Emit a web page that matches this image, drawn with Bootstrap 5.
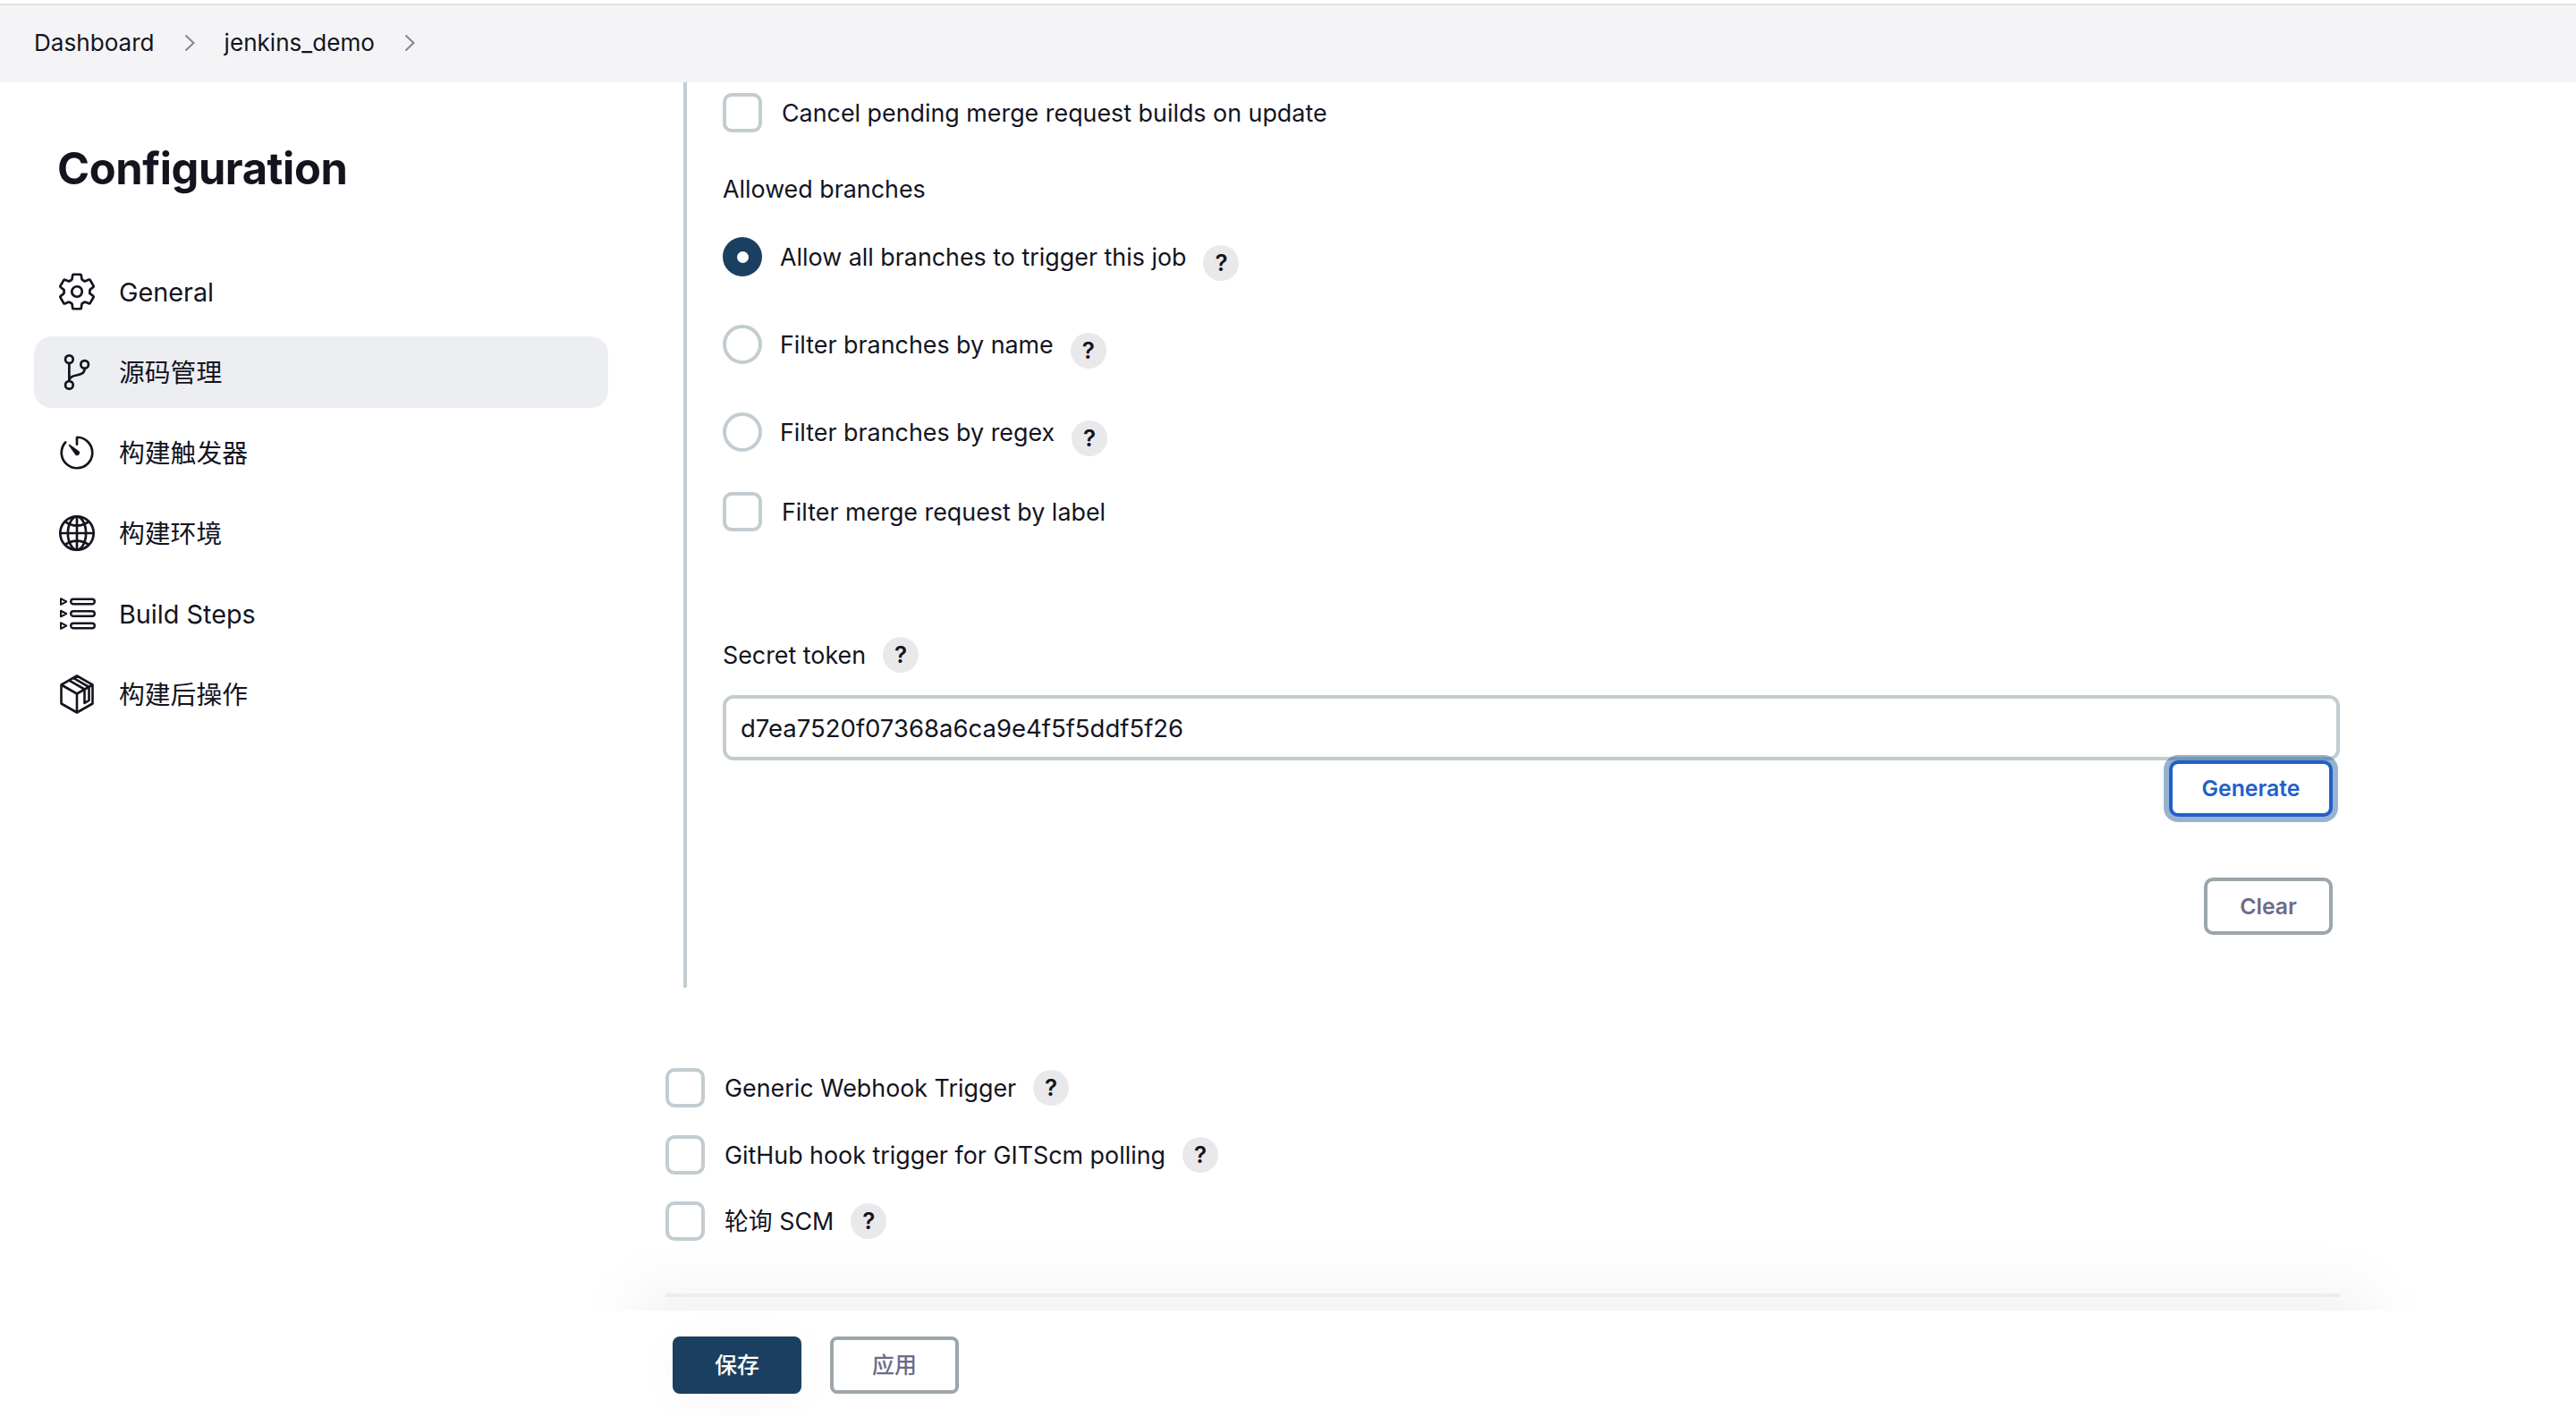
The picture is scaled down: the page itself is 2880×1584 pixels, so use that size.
<!doctype html>
<html lang="zh"><head><meta charset="utf-8">
<link href="https://cdn.jsdelivr.net/npm/bootstrap@5.3.0/dist/css/bootstrap.min.css" rel="stylesheet">
<style>
html,body{height:1584px;overflow:hidden}
body{background:#fff;color:#14141f;font-family:Inter,"Noto Sans CJK SC",sans-serif;font-size:26.85px;line-height:44px}
.topstrip{margin-top:4px;height:88px;background:#f4f4f6;border-top:2px solid #dfe0e3;padding:0 0 2px 38px;font-size:26.1px}
.crumbgap{width:78px;justify-content:center;color:#85858e}
.sidepane{width:744px;flex:none;padding:0 64px 0 38px}
.pagetitle{font-size:48.8px;font-weight:700;line-height:60px;margin:67px 0 0 26px;letter-spacing:-.4px}
.sidemenu{margin-top:67px;gap:10px}
.sideitem{height:80px;padding-left:25px;gap:24px;border-radius:20px;font-size:28.8px;color:#14141f}
.sideitem span{padding-top:2px}
.sideitem.current{background:#edeef2}
.sideitem svg{width:46px;height:46px;flex:none}
.mainpane{width:1872px;flex:none}
.nestbox{margin-left:20px;height:1012px;border-left:4px solid #c3ccd1;padding:12px 0 0 40px}
.fakecheck{width:44px;height:44px;border:4px solid #c3ccd1;border-radius:10px;flex:none;background:#fff;margin-right:22px}
.fakeradio{width:44px;height:44px;border:4px solid #c3ccd1;border-radius:50%;flex:none;background:#fff;margin-right:20px}
.fakeradio.on{border:none;background:#1a3f60;display:flex;align-items:center;justify-content:center}
.fakeradio.on::after{content:"";width:13px;height:13px;background:#fff;border-radius:50%}
.optrow,.radrow{height:44px}
.helpdot{width:40px;height:40px;border-radius:50%;background:#e9e9eb;font-size:26px;font-weight:600;line-height:40px;text-align:center;flex:none;margin-left:19px}
.helpdot.low{transform:translateY(7px)}
.gap32{margin-top:32px}.gap41{margin-top:41px}.gap54{margin-top:54px}.gap45{margin-top:45px}.gap116{margin-top:116px}
.tokeninput{height:73px;margin-top:23px;border:4px solid #c3ccd1;border-radius:12px;padding:0 16px;font-size:27.5px;color:#14141f;box-shadow:none;width:1808px;line-height:1}
.tokenactions{width:1808px}
.actbtn{font-size:24.8px;font-weight:600;line-height:1;border-width:4px;border-style:solid;border-radius:10px;background:#fff;padding:0}
.genbtn{width:183px;height:63px;margin-right:8px;border-color:#2160c8;color:#2160c8;box-shadow:0 0 0 6px rgba(26,86,150,.45);position:relative}
.clearbtn{width:144px;height:64px;margin:68px 8px 0 0;border-color:#9ba6ac;color:#6c6c87}
.lowerlist{margin-top:90px}
.lowerrow{height:44px;margin-bottom:30.5px}
.lowerrow:last-child{margin-bottom:0}
.lowerrow .fakecheck{margin-right:22px}
.shadeband{position:relative;height:78px;padding-top:59px;margin-left:-744px;width:2880px;overflow:hidden}
.shadeglow{position:absolute;left:712px;width:1938px;top:56px;height:120px;background:rgba(0,0,0,.055);filter:blur(30px)}
.rulebar{position:relative;height:4px;background:#ebebf0;margin-left:744px;width:1872px}
.savebar{position:relative;height:119px;background:#fff;margin-left:-744px;width:2880px;padding:29px 0 0 752px;gap:32px;align-items:flex-start}
.footbtn{width:144px;height:64px;font-size:25px;font-weight:500;border-radius:8px;padding:0;line-height:1;border:4px solid #1a3f60}
.footsave{background:#1a3f60;color:#fff;box-shadow:0 6px 50px rgba(0,0,0,.035)}
.footapply{background:#fff;color:#6c6c87;border-color:#9ba6ac}
</style></head><body>
<div class="topstrip d-flex align-items-center">
 <span>Dashboard</span>
 <span class="crumbgap d-flex"><svg width="12" height="20" viewBox="0 0 12 20" fill="none" stroke="currentColor" stroke-width="2"><path d="M1.5 1.5l9 8.5-9 8.5"/></svg></span>
 <span>jenkins_demo</span>
 <span class="crumbgap d-flex"><svg width="12" height="20" viewBox="0 0 12 20" fill="none" stroke="currentColor" stroke-width="2"><path d="M1.5 1.5l9 8.5-9 8.5"/></svg></span>
</div>
<div class="d-flex">
 <aside class="sidepane">
  <h1 class="pagetitle">Configuration</h1>
  <div class="sidemenu d-flex flex-column">
   <div class="sideitem d-flex align-items-center"><svg viewBox="0 0 512 512" fill="none" stroke="#14141f" stroke-width="30" stroke-linejoin="round"><path d="M262.29 192.31a64 64 0 1057.4 57.4 64.13 64.13 0 00-57.4-57.4zM416.39 256a154.34 154.34 0 01-1.53 20.79l45.21 35.46a10.81 10.81 0 012.45 13.75l-42.77 74a10.81 10.81 0 01-13.14 4.59l-44.9-18.08a16.11 16.11 0 00-15.17 1.75A164.48 164.48 0 01325 400.8a15.94 15.94 0 00-8.82 12.14l-6.73 47.89a11.08 11.08 0 01-10.68 9.17h-85.54a11.11 11.11 0 01-10.69-8.87l-6.72-47.82a16.07 16.07 0 00-9-12.22 155.3 155.3 0 01-21.46-12.57 16 16 0 00-15.11-1.71l-44.89 18.07a10.81 10.81 0 01-13.14-4.58l-42.77-74a10.8 10.8 0 012.45-13.75l38.21-30a16.05 16.05 0 006-14.08c-.36-4.17-.58-8.33-.58-12.5s.21-8.27.58-12.35a16 16 0 00-6.07-13.94l-38.19-30A10.81 10.81 0 0149.48 186l42.77-74a10.81 10.81 0 0113.14-4.59l44.9 18.08a16.11 16.11 0 0015.17-1.75A164.48 164.48 0 01187 111.2a15.94 15.94 0 008.82-12.14l6.73-47.89A11.08 11.08 0 01213.23 42h85.54a11.11 11.11 0 0110.69 8.87l6.72 47.82a16.07 16.07 0 009 12.22 155.3 155.3 0 0121.46 12.57 16 16 0 0015.11 1.71l44.89-18.07a10.81 10.81 0 0113.14 4.58l42.77 74a10.8 10.8 0 01-2.45 13.75l-38.21 30a16.05 16.05 0 00-6.05 14.08c.33 4.14.55 8.3.55 12.47z"/></svg><span>General</span></div>
   <div class="sideitem current d-flex align-items-center"><svg viewBox="0 0 512 512" fill="none" stroke="#14141f" stroke-width="30"><circle cx="160" cy="96" r="48"/><circle cx="160" cy="416" r="48"/><path d="M160 368V144"/><circle cx="352" cy="160" r="48"/><path d="M352 208c0 128-192 48-192 160"/></svg><span>源码管理</span></div>
   <div class="sideitem d-flex align-items-center"><svg viewBox="0 0 512 512" fill="none" stroke="#14141f" stroke-width="30" stroke-linecap="round"><path d="M112.91 128A191.85 191.85 0 0064 254c-1.18 106.35 85.65 193.8 192 194 106.2.2 192-85.83 192-192 0-104.54-83.55-189.61-187.5-192a4.36 4.36 0 00-4.5 4.37V152"/><path fill="#14141f" stroke="none" d="M233.38 278.63l-79-113a8.13 8.13 0 0111.32-11.32l113 79a32.5 32.5 0 01-37 53.12 33.09 33.09 0 01-8.32-7.8z"/></svg><span>构建触发器</span></div>
   <div class="sideitem d-flex align-items-center"><svg viewBox="0 0 512 512" fill="none" stroke="#14141f" stroke-width="30"><path d="M256 48C141.13 48 48 141.13 48 256s93.13 208 208 208 208-93.13 208-208S370.87 48 256 48z"/><path d="M256 48c-58.07 0-112.67 93.13-112.67 208S197.93 464 256 464s112.67-93.13 112.67-208S314.07 48 256 48z"/><path d="M117.33 117.33c38.24 27.15 86.38 43.34 138.67 43.34s100.43-16.19 138.67-43.34M394.67 394.67c-38.24-27.15-86.38-43.34-138.67-43.34s-100.43 16.19-138.67 43.34"/><path d="M256 48v416M464 256H48"/></svg><span>构建环境</span></div>
   <div class="sideitem d-flex align-items-center"><svg viewBox="0 0 46 46" fill="none" stroke="#14141f" stroke-width="2.4" stroke-linejoin="round"><rect x="16.2" y="6.7" width="26.6" height="5.6" rx="2.8"/><rect x="16.2" y="20.2" width="26.6" height="5.6" rx="2.8"/><rect x="16.2" y="33.7" width="26.6" height="5.6" rx="2.8"/><path d="M5 6.2l6.2 3.3L5 12.8zM5 19.7l6.2 3.3L5 26.3zM5 33.2l6.2 3.3L5 39.8z" stroke-width="2"/></svg><span>Build Steps</span></div>
   <div class="sideitem d-flex align-items-center"><svg viewBox="0 0 46 46" fill="none" stroke="#14141f" stroke-width="2.6" stroke-linejoin="round"><path d="M23 2.5L40.5 12.5V33.5L23 43.5 5.5 33.5V12.5Z"/><path d="M5.5 12.5L23 22.5 40.5 12.5M23 22.5V43.5"/><path d="M14 7.4L31.5 17.5V33L36.5 30V15L19 4.9"/></svg><span>构建后操作</span></div>
  </div>
 </aside>
 <main class="mainpane">
  <section class="nestbox">
   <div class="optrow d-flex align-items-center"><span class="fakecheck"></span><span>Cancel pending merge request builds on update</span></div>
   <div class="gap41">Allowed branches</div>
   <div class="radrow gap32 d-flex align-items-center"><span class="fakeradio on"></span><span>Allow all branches to trigger this job</span><span class="helpdot low">?</span></div>
   <div class="radrow gap54 d-flex align-items-center"><span class="fakeradio"></span><span>Filter branches by name</span><span class="helpdot low">?</span></div>
   <div class="radrow gap54 d-flex align-items-center"><span class="fakeradio"></span><span>Filter branches by regex</span><span class="helpdot low">?</span></div>
   <div class="optrow gap45 d-flex align-items-center"><span class="fakecheck"></span><span>Filter merge request by label</span></div>
   <div class="optrow gap116 d-flex align-items-center"><span>Secret token</span><span class="helpdot">?</span></div>
   <input class="form-control tokeninput" value="d7ea7520f07368a6ca9e4f5f5ddf5f26" readonly>
   <div class="tokenactions d-flex flex-column align-items-end">
    <button class="btn actbtn genbtn" type="button">Generate</button>
    <button class="btn actbtn clearbtn" type="button">Clear</button>
   </div>
  </section>
  <section class="lowerlist">
   <div class="lowerrow d-flex align-items-center"><span class="fakecheck"></span><span>Generic Webhook Trigger</span><span class="helpdot">?</span></div>
   <div class="lowerrow d-flex align-items-center"><span class="fakecheck"></span><span>GitHub hook trigger for GITScm polling</span><span class="helpdot">?</span></div>
   <div class="lowerrow d-flex align-items-center"><span class="fakecheck"></span><span>轮询 SCM</span><span class="helpdot">?</span></div>
  </section>
  <div class="shadeband"><div class="shadeglow"></div><div class="rulebar"></div></div>
  <div class="savebar d-flex"><button class="btn footbtn footsave" type="button">保存</button><button class="btn footbtn footapply" type="button">应用</button></div>
 </main>
</div>
<script src="https://cdn.jsdelivr.net/npm/bootstrap@5.3.0/dist/js/bootstrap.bundle.min.js"></script>
</body></html>
